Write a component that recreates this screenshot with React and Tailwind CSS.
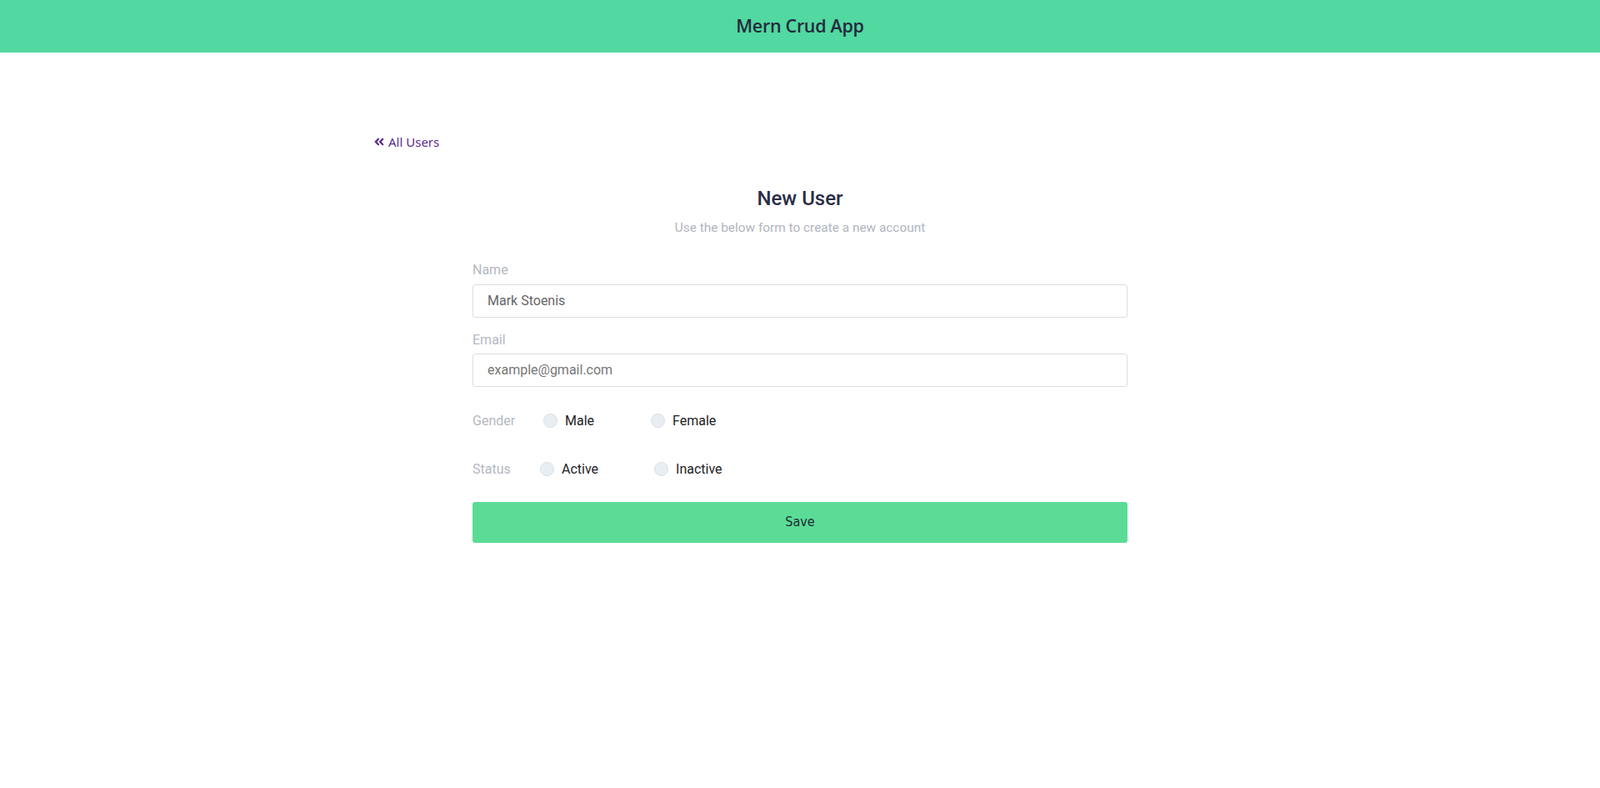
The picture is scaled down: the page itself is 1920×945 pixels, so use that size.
import { FaAngleDoubleLeft } from "react-icons/fa";

const Radio = ({ label, className = "" }) => (
  <label className={`flex items-center gap-[9px] ${className}`}>
    <span className="w-[17px] h-[17px] rounded-full bg-[#e9eef3] border border-[#d8dee5]"></span>
    <span className="text-[16px] text-[#1d1d1f]">{label}</span>
  </label>
);

const App = () => {
  return (
    <div className="min-h-screen bg-white font-['Roboto',sans-serif]">
      {/* Header */}
      <header className="h-[63px] bg-[#52d8a1] flex items-center justify-center">
        <h1 className="text-[21.5px] font-['Open_Sans',sans-serif] font-semibold text-[#232a3d] tracking-[-0.3px]">
          Mern Crud App
        </h1>
      </header>

      <div className="max-w-[1024px] mx-auto pt-[96px]">
        <a href="#" className="flex items-center gap-[4px] text-[15px] text-[#5b2a8e] font-['Noto_Sans',sans-serif] w-fit">
          <FaAngleDoubleLeft className="w-[14px] h-[14px]" />
          <span>All Users</span>
        </a>

        <div className="w-[786px] mx-auto mt-[41px]">
          <div className="text-center">
            <h2 className="text-[24px] font-medium text-[#2a2d45] leading-[30px]">New User</h2>
            <p className="mt-[9px] text-[15.4px] text-[#b0b5c0]">
              Use the below form to create a new account
            </p>
          </div>

          <form className="mt-[29px]">
            <div>
              <label className="block text-[16px] text-[#b3b8c2] leading-[20px]">Name</label>
              <input
                className="mt-[7px] w-full h-[40px] border border-[#dcdde3] rounded-[3px] px-[17px] text-[16px] text-[#666] outline-none"
                defaultValue="Mark Stoenis"
              />
            </div>
            <div className="mt-[17px]">
              <label className="block text-[16px] text-[#b3b8c2] leading-[20px]">Email</label>
              <input
                className="mt-[6px] w-full h-[40px] border border-[#dcdde3] rounded-[3px] px-[17px] text-[16px] text-[#666] placeholder-[#777] outline-none"
                placeholder="example@gmail.com"
              />
            </div>

            <div className="mt-[31px] flex items-center h-[20px]">
              <span className="w-[85px] text-[16px] text-[#b3b8c2]">Gender</span>
              <Radio label="Male" />
              <Radio label="Female" className="ml-[68px]" />
            </div>

            <div className="mt-[38px] flex items-center h-[20px]">
              <span className="w-[81px] text-[16px] text-[#b3b8c2]">Status</span>
              <Radio label="Active" />
              <Radio label="Inactive" className="ml-[67px]" />
            </div>

            <button
              type="button"
              className="mt-[29px] w-full h-[49px] bg-[#5adc97] rounded-[3px] text-[16px] text-[#1f2a33] font-['DejaVu_Sans_Condensed',sans-serif]"
            >
              Save
            </button>
          </form>
        </div>
      </div>
    </div>
  );
};

export default App;
